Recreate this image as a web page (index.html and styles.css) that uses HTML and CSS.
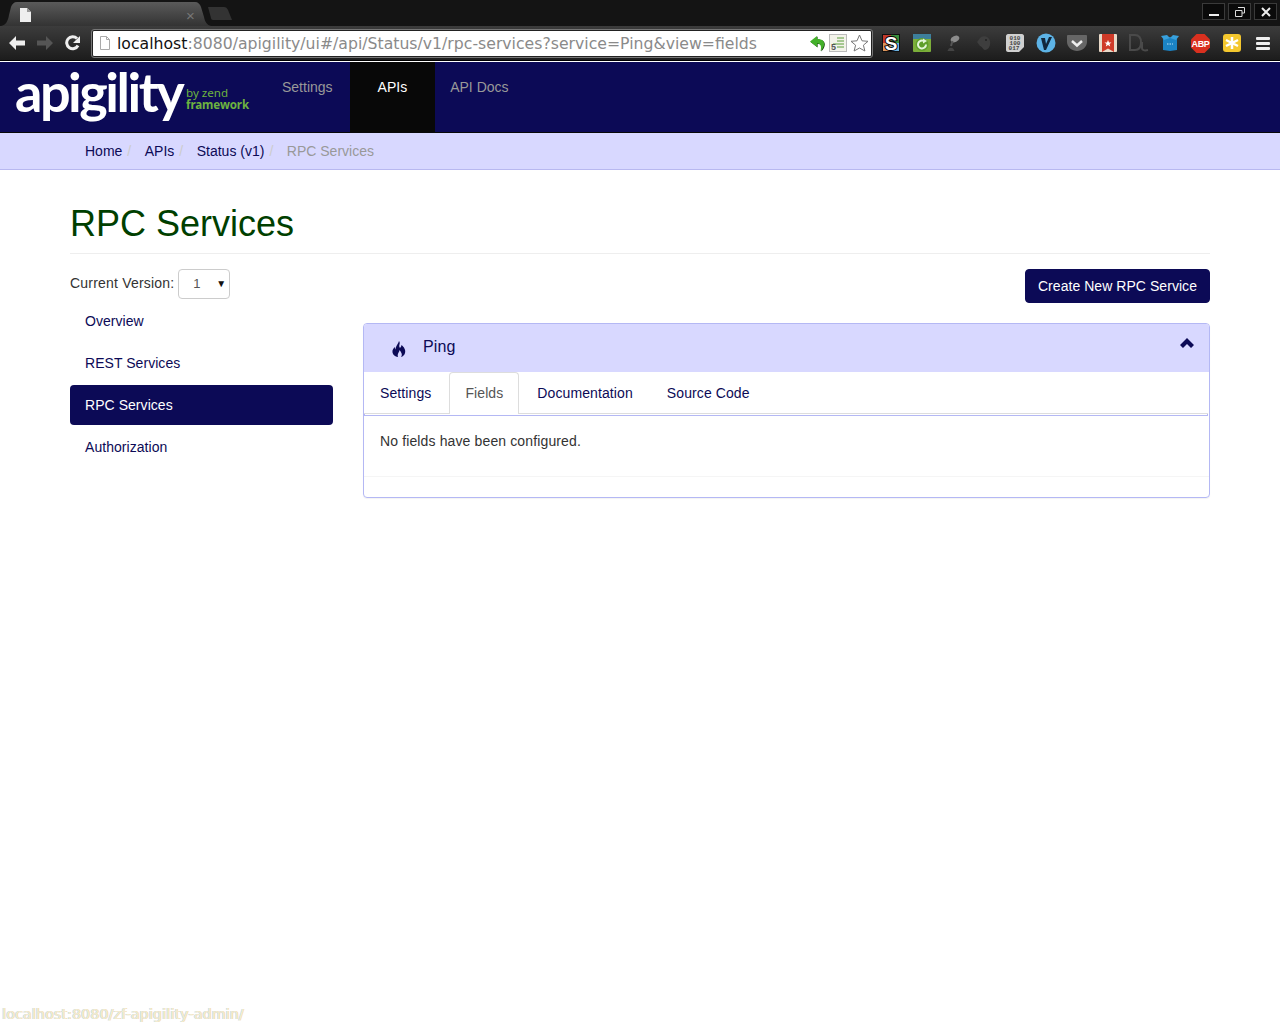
FILE: index.html
```html
<!DOCTYPE html>
<html lang="en">
<head>
    <meta charset="UTF-8">
    <title>Apigility Admin</title>
    <link rel="stylesheet" href="styles.css">
</head>
<body>
    <!-- browser frame -->
    <div class="tabstrip">
        <div class="tab">
            <svg class="tab-shape" width="210" height="25" viewBox="0 0 210 25"><defs><linearGradient id="tabfill" x1="0" y1="0" x2="0" y2="1"><stop offset="0" stop-color="#5a5a5a"/><stop offset="1" stop-color="#333"/></linearGradient></defs><path d="M0 25C5 24 7 20 8 14L10 6C11 3 13 1 16 1H194C197 1 199 3 200 6L203 16C204 21 206 24 210 25Z" fill="url(#tabfill)"/></svg>
            <svg class="tab-page" width="12" height="14" viewBox="0 0 12 14"><path d="M0 0H7L11 4V14H0Z" fill="#eee"/><path d="M7 0V4H11Z" fill="#999"/></svg>
            <span class="tab-close">×</span>
        </div>
        <svg class="new-tab" width="26" height="15" viewBox="0 0 26 15"><path d="M1 1H17C19 1 20 2 21 4L25 14H6C5 14 4 13 4 12Z" fill="#333"/></svg>
        <div class="win-buttons">
            <span class="win-btn"><svg width="12" height="12" viewBox="0 0 12 12"><rect x="1" y="8" width="10" height="2" fill="#eee"/></svg></span>
            <span class="win-btn"><svg width="12" height="12" viewBox="0 0 12 12"><path d="M4 1.500H10.500V7H8M1.500 4.500H8V10.500H1.500Z" fill="none" stroke="#ddd"/></svg></span>
            <span class="win-btn"><svg width="12" height="12" viewBox="0 0 12 12"><path d="M2 2L10 10M10 2L2 10" stroke="#eee" stroke-width="2"/></svg></span>
        </div>
    </div>
    <div class="toolbar">
        <svg class="nav-btn" width="16" height="14" viewBox="0 0 16 14"><path d="M7 0L0 7L7 14V9.500H16V4.500H7Z" fill="#eee"/></svg>
        <svg class="nav-btn" width="16" height="14" viewBox="0 0 16 14"><path d="M9 0L16 7L9 14V9.500H0V4.500H9Z" fill="#555"/></svg>
        <svg class="nav-btn" width="16" height="16" viewBox="0 0 16 16"><path d="M13 10.500A6 6 0 1 1 12 3.500" fill="none" stroke="#eee" stroke-width="3"/><path d="M15 1V8H8Z" fill="#eee"/></svg>
        <div class="omnibox">
            <svg width="12" height="14" viewBox="0 0 12 14"><path d="M1.500 .5H7.500L10.500 3.500V13.500H1.500Z" fill="#fff" stroke="#aaa"/><path d="M7.500 .5V3.500H10.500" fill="none" stroke="#aaa"/></svg>
            <span class="url"><span class="url-host">localhost</span>:8080/apigility/ui#/api/Status/v1/rpc-services?service=Ping&amp;view=fields</span>
            <svg class="omni-icon" width="16" height="17" viewBox="0 0 16 17"><path d="M7 1L0 6.500L7 12V8.500C10 8 12 10 10.500 16C15 12 17 4 7 4Z" fill="#123d0c" transform="translate(.6 .6)"/><path d="M7 1L0 6.500L7 12V8.500C10 8 12 10 10.500 16C15 12 17 4 7 4Z" fill="#43b02a"/></svg>
            <svg class="omni-icon" width="18" height="18" viewBox="0 0 18 18"><rect x=".5" y=".5" width="17" height="17" fill="#f3f3ea" stroke="#bbb"/><path d="M8 4H15M8 7H15M4 10H15M8 13H15" stroke="#5a9c3a"/><text x="2" y="16" class="omni-five">5</text></svg>
            <svg width="19" height="18" viewBox="0 0 19 18"><path d="M9.500 1L12 6.800L18 7.300L13.400 11.200L14.900 17L9.500 14L4.100 17L5.600 11.200L1 7.300L7 6.800Z" fill="#fff" stroke="#777"/></svg>
        </div>
        <div class="ext-icons">
            <span class="ext"><svg width="18" height="18" viewBox="0 0 18 18"><rect width="9" height="9" fill="#c0392b"/><rect x="9" width="9" height="9" fill="#3b8f3b"/><rect y="9" width="9" height="9" fill="#d9975f"/><rect x="9" y="9" width="9" height="9" fill="#6fb2dc"/><rect x=".5" y=".5" width="17" height="17" fill="none" stroke="#111"/><text x="9" y="16" class="ext-s">S</text></svg></span>
            <span class="ext"><svg width="18" height="18" viewBox="0 0 18 18"><rect width="18" height="18" rx="1" fill="#7cae3a"/><rect width="18" height="5" fill="#3d7f9c"/><circle cx="9" cy="10.500" r="6.500" fill="#5f9f2a"/><path d="M13 10.500A4 4 0 1 1 11 7" fill="none" stroke="#e4f5d8" stroke-width="2"/><path d="M10 4.500L14 7L10 9.500Z" fill="#e4f5d8"/></svg></span>
            <span class="ext"><svg width="14" height="18" viewBox="0 0 14 18"><ellipse cx="9" cy="5" rx="4.500" ry="3" fill="#8c8c8c" transform="rotate(-25 9 5)"/><path d="M6.500 7L5 12" stroke="#555" stroke-width="2"/><path d="M1.500 17C2.500 12.500 7.500 12.500 8.500 17Z" fill="#444"/></svg></span>
            <span class="ext"><svg width="14" height="16" viewBox="0 0 14 16"><path d="M3 3C6 0 12 1 13 6C14 11 11 15 8 15C6 15 6 12 3 11L0 7Z" fill="#3e3e3e"/><circle cx="9" cy="5" r="1" fill="#222"/></svg></span>
            <span class="ext"><svg width="18" height="18" viewBox="0 0 18 18"><path d="M2 0H16C17 0 18 1 18 2V13L13 18H2C1 18 0 17 0 16V2C0 1 1 0 2 0Z" fill="#d0d0d0"/><text x="9" y="6" class="ext-bin">010</text><text x="9" y="11" class="ext-bin">100</text><text x="8" y="16" class="ext-bin">017</text></svg></span>
            <span class="ext"><svg width="20" height="20" viewBox="0 0 20 20"><circle cx="10" cy="10" r="9.500" fill="#5db3e6"/><path d="M5 5H9L10 11L13 4H16L10 17H8Z" fill="#12283c"/></svg></span>
            <span class="ext"><svg width="20" height="16" viewBox="0 0 20 16"><path d="M1 0H19C19.500 0 20 .5 20 1V7C20 12 15 16 10 16C5 16 0 12 0 7V1C0 .5 .5 0 1 0Z" fill="#666"/><path d="M5 6L10 10.500L15 6" fill="none" stroke="#eee" stroke-width="2.500"/></svg></span>
            <span class="ext"><svg width="18" height="18" viewBox="0 0 18 18"><rect width="18" height="18" rx="1" fill="#e8d9c8"/><path d="M3 0H15V18L9 14.500L3 18Z" fill="#cf3a28"/><path d="M9 6L10 8.500H12.500L10.500 10L11.200 12.500L9 11L6.800 12.500L7.500 10L5.500 8.500H8Z" fill="#fff"/></svg></span>
            <span class="ext"><svg width="20" height="18" viewBox="0 0 20 18"><path d="M1 1H6C11 1 12 4 12 8.500C12 13 11 16 6 16H1Z" fill="none" stroke="#4a4a4a" stroke-width="2"/><path d="M13 8V14C13 16 15 17 19 16" fill="none" stroke="#4a4a4a" stroke-width="2"/></svg></span>
            <span class="ext"><svg width="18" height="16" viewBox="0 0 18 16"><path d="M2 4L9 2L16 4V15L9 16L2 15Z" fill="#1b83c4"/><path d="M0 1L6 0L9 3L3 5ZM18 1L12 0L9 3L15 5Z" fill="#38a0dc"/><path d="M6 9H12" stroke="#bfe3f7" stroke-dasharray="1.500 1"/></svg></span>
            <span class="ext"><svg width="19" height="19" viewBox="0 0 19 19"><path d="M5.500 0H13.500L19 5.500V13.500L13.500 19H5.500L0 13.500V5.500Z" fill="#d9301f"/><text x="9.500" y="13" class="ext-abp">ABP</text></svg></span>
            <span class="ext"><svg width="18" height="18" viewBox="0 0 18 18"><rect width="18" height="18" rx="3" fill="#f4c72e"/><path d="M9 3V15M3 6L15 12M15 6L3 12" stroke="#fff" stroke-width="2.500"/></svg></span>
            <span class="ext"><svg width="14" height="14" viewBox="0 0 14 14"><rect y="1" width="14" height="3" rx="1" fill="#eee"/><rect y="6" width="14" height="3" rx="1" fill="#eee"/><rect y="11" width="14" height="3" rx="1" fill="#eee"/></svg></span>
        </div>
    </div>

    <!-- app -->
    <header class="topnav">
        <a class="brand">
            <span class="brand-name">apigility</span>
            <span class="brand-by"><span class="brand-zend">by zend</span><span class="brand-fw">framework</span></span>
        </a>
        <nav class="topnav-links">
            <a class="topnav-link">Settings</a>
            <a class="topnav-link active">APIs</a>
            <a class="topnav-link">API Docs</a>
        </nav>
    </header>
    <ol class="breadcrumb">
        <li><a>Home</a></li>
        <li><a>APIs</a></li>
        <li><a>Status (v1)</a></li>
        <li class="current">RPC Services</li>
    </ol>

    <main class="container">
        <h1 class="page-title">RPC Services</h1>
        <div class="columns">
            <aside class="sidebar">
                <div class="version">
                    <span class="version-label">Current Version:</span>
                    <span class="version-select"><span>1</span><span class="version-arrow">▼</span></span>
                </div>
                <ul class="side-nav">
                    <li><a>Overview</a></li>
                    <li><a>REST Services</a></li>
                    <li><a class="active">RPC Services</a></li>
                    <li><a>Authorization</a></li>
                </ul>
            </aside>
            <section class="content">
                <div class="actions"><button class="btn-create">Create New RPC Service</button></div>
                <div class="panel">
                    <div class="panel-heading">
                        <svg class="icon-fire" width="14" height="16" viewBox="0 0 14 16"><path d="M7 0C9 3 6 4 8 7C9 6 9.500 5 9.500 4C12 6 14 9 13 12C12.500 14 11 15.500 9 16C11 13.500 9 11 7.500 9C7.500 11 5 12.500 6 16C3 15.500 1 14 .5 11.500C0 9 1.500 7.500 2.500 6C3 7 3 8 3.500 8.500C3.500 5 6 3.500 7 0Z" fill="#0c0a56"/></svg>
                        <span class="panel-title">Ping</span>
                        <svg class="icon-chevron" width="14" height="11" viewBox="0 0 14 11"><path d="M7 0L14 7L11 10L7 6L3 10L0 7Z" fill="#0c0a56"/></svg>
                    </div>
                    <ul class="tabs">
                        <li><a>Settings</a></li>
                        <li class="active"><a>Fields</a></li>
                        <li class="tab-docs"><a>Documentation</a></li>
                        <li><a>Source Code</a></li>
                    </ul>
                    <div class="tab-body">No fields have been configured.</div>
                    <div class="panel-foot"></div>
                </div>
            </section>
        </div>
    </main>
    <div class="statusbar">localhost:8080/zf-apigility-admin/</div>
</body>
</html>
```

FILE: styles.css
```css
* {
    box-sizing: border-box;
}
html, body {
    height: 100%;
}
body {
    margin: 0;
    height: 1024px;
    overflow: hidden;
    position: relative;
    font-family: "Liberation Sans", Arial, sans-serif;
    font-size: 14px;
    line-height: 20px;
    color: #333;
    background: #fff;
}
ul, ol {
    list-style: none;
    margin: 0;
    padding: 0;
}

/* browser frame */
.tabstrip {
    height: 26px;
    background: #141414;
    display: flex;
    align-items: flex-end;
    padding-left: 1px;
}
.tab {
    width: 210px;
    height: 25px;
    position: relative;
}
.tab-shape {
    display: block;
}
.tab-page {
    position: absolute;
    left: 19px;
    top: 7px;
}
.tab-close {
    position: absolute;
    left: 185px;
    top: 5px;
    color: #777;
    font-size: 15px;
}
.new-tab {
    margin-bottom: 5px;
    margin-left: -4px;
}
.win-buttons {
    margin-left: auto;
    align-self: flex-start;
    display: flex;
    gap: 3px;
    padding: 3px 3px 0 0;
}
.win-btn {
    width: 23px;
    height: 17px;
    border: 1px solid #3a3a3a;
    background: #0a0a0a;
    display: flex;
    align-items: center;
    justify-content: center;
}
.toolbar {
    height: 35px;
    background: linear-gradient(#3c3c3c, #1c1c1c);
    border-bottom: 1px solid #000;
    display: flex;
    align-items: center;
    padding-left: 9px;
}
.nav-btn {
    margin-right: 12px;
    flex: none;
}
.toolbar .nav-btn:nth-child(3) {
    margin-right: 11px;
}
.omnibox {
    width: 780px;
    height: 27px;
    background: #fff;
    border: 1px solid #222;
    outline: 1px solid #777;
    border-radius: 2px;
    display: flex;
    align-items: center;
    padding: 0 2px 0 6px;
    flex: none;
}
.url {
    margin-left: 6px;
    padding-top: 2px;
    font-family: "DejaVu Sans", sans-serif;
    font-size: 15.7px;
    color: #8a8a8a;
    white-space: nowrap;
    flex: 1;
}
.url-host {
    color: #111;
}
.omni-icon {
    margin-right: 3px;
}
.omni-five {
    font-family: "Liberation Sans", sans-serif;
    font-size: 9px;
    font-weight: bold;
    fill: #555;
}
.ext-icons {
    display: flex;
    margin-left: 3px;
}
.ext {
    width: 31px;
    height: 24px;
    display: flex;
    align-items: center;
    justify-content: center;
}
.ext-s {
    font-family: "Liberation Sans", sans-serif;
    font-size: 19px;
    font-weight: bold;
    fill: #fff;
    stroke: #000;
    stroke-width: 2px;
    paint-order: stroke;
    text-anchor: middle;
}
.ext-abp {
    font-family: "Liberation Sans", sans-serif;
    font-size: 9px;
    font-weight: bold;
    letter-spacing: -.3px;
    fill: #fff;
    text-anchor: middle;
}
.ext-bin {
    font-family: "Liberation Mono", monospace;
    font-size: 6px;
    font-weight: bold;
    fill: #444;
    text-anchor: middle;
}

/* top navigation */
.topnav {
    border-top: 1px solid #fff;
    height: 72px;
    background: #0c0a56;
    border-bottom: 1px solid #080808;
    display: flex;
}
.brand {
    width: 267px;
    padding-left: 15px;
    display: flex;
    flex: none;
    color: #fff;
}
.brand-name {
    font-family: "Lato", sans-serif;
    font-size: 54px;
    font-weight: 700;
    line-height: 60px;
    letter-spacing: -2.5px;
    height: 60px;
    width: 171px;
    flex: none;
}
.brand-by {
    display: flex;
    flex-direction: column;
    margin: 25px 0 0 0;
    color: #6cb33f;
    font-family: "Noto Sans", sans-serif;
    font-size: 11.600px;
    line-height: 12px;
}
.brand-fw {
    font-weight: 700;
    letter-spacing: -.1px;
}
.topnav-links {
    display: flex;
    gap: 2px;
}
.topnav-link {
    padding: 15px;
    color: #999;
    height: 70px;
}
.topnav-link.active {
    padding: 15px 28px;
    color: #fff;
    background: #080808;
}
.topnav-link + .topnav-link.active + .topnav-link {
    margin-left: -2px;
}
.breadcrumb {
    height: 37px;
    padding: 8px 85px;
    background: #d8d8ff;
    border-bottom: 1px solid #b8b8f0;
    display: flex;
}
.breadcrumb li {
    color: #999;
}
.breadcrumb a {
    color: #0c0a56;
}
.breadcrumb li + li::before {
    content: "/";
    color: #ccc;
    padding: 0 13.500px 0 5px;
}

/* page */
.container {
    padding: 0 70px;
}
.page-title {
    margin: 30px 0 15px;
    padding: 4px 0 0;
    border-bottom: 1px solid #eee;
    font-size: 36px;
    font-weight: 500;
    line-height: 40px;
    color: #003f00;
    height: 54px;
}
.columns {
    display: grid;
    grid-template-columns: 263px 847px;
    gap: 30px;
}
.version {
    display: flex;
    align-items: flex-start;
    gap: 4px;
    height: 30px;
}
.version-label {
    letter-spacing: .2px;
    padding-top: 4px;
}
.version-select {
    width: 52px;
    height: 30px;
    border: 1px solid #ccc;
    border-radius: 4px;
    padding-left: 14px;
    display: flex;
    align-items: center;
    font-size: 13px;
    color: #555;
    position: relative;
}
.version-arrow {
    position: absolute;
    left: 37px;
    top: 4px;
    font-size: 10px;
    color: #111;
}
.side-nav {
    margin-top: 2px;
}
.side-nav li + li {
    margin-top: 2px;
}
.side-nav a {
    display: block;
    padding: 10px 15px;
    color: #0c0a56;
    letter-spacing: .05px;
    border-radius: 4px;
}
.side-nav a.active {
    color: #fff;
    background: #0c0a56;
}
.actions {
    display: flex;
    justify-content: flex-end;
    margin-bottom: 20px;
}
.btn-create {
    height: 34px;
    padding: 6px 12px;
    border: 1px solid #0c0a56;
    border-radius: 4px;
    background: #0c0a56;
    color: #fff;
    font: 14px/20px "Liberation Sans", Arial, sans-serif;
    letter-spacing: .05px;
}
.panel {
    height: 175px;
    border: 1px solid #b4b8f4;
    border-radius: 4px;
    box-shadow: 0 1px 1px rgba(0, 0, 0, 0.05);
}
.panel-heading {
    height: 48px;
    background: #d8d8ff;
    display: flex;
    align-items: flex-start;
    color: #0c0a56;
    border-radius: 3px 3px 0 0;
}
.icon-fire {
    margin: 17px 0 0 28px;
}
.panel-title {
    margin: 12px 0 0 17px;
    font-size: 16px;
    line-height: 22px;
    letter-spacing: .1px;
}
.icon-chevron {
    margin: 14px 15px 0 auto;
}
.tabs {
    display: flex;
    height: 42px;
    border-bottom: 1px solid #ddd;
    margin: 0 1px 2px 0;
    box-shadow: 0 2px 0 -1px #fff, 0 2px 0 #b4b8f4;
    letter-spacing: .1px;
}
.tabs a {
    display: block;
    padding: 11px 15px 0;
    height: 41px;
    color: #0c0a56;
}
.tabs li {
    margin-right: 3px;
}
.tabs li:first-child {
    margin-left: 1px;
}
.tabs li.tab-docs {
    margin-right: 4px;
}
.tabs li.active {
    height: 42px;
    background: #fff;
    border: 1px solid #ddd;
    border-bottom: 0;
    border-radius: 4px 4px 0 0;
}
.tabs li.active a {
    color: #555;
    padding-top: 10px;
}
.tab-body {
    height: 61px;
    padding: 15px 16px 0;
    border-bottom: 1px solid #f5f5f5;
    letter-spacing: .13px;
}
.statusbar {
    position: absolute;
    left: 2px;
    bottom: 1px;
    font-family: "DejaVu Sans", sans-serif;
    font-size: 14px;
    letter-spacing: .24px;
    line-height: 18px;
    color: #f2ead0;
    text-shadow: -1px 0 rgba(140, 190, 235, 0.45), 1px 0 rgba(240, 190, 90, 0.45);
}
```
